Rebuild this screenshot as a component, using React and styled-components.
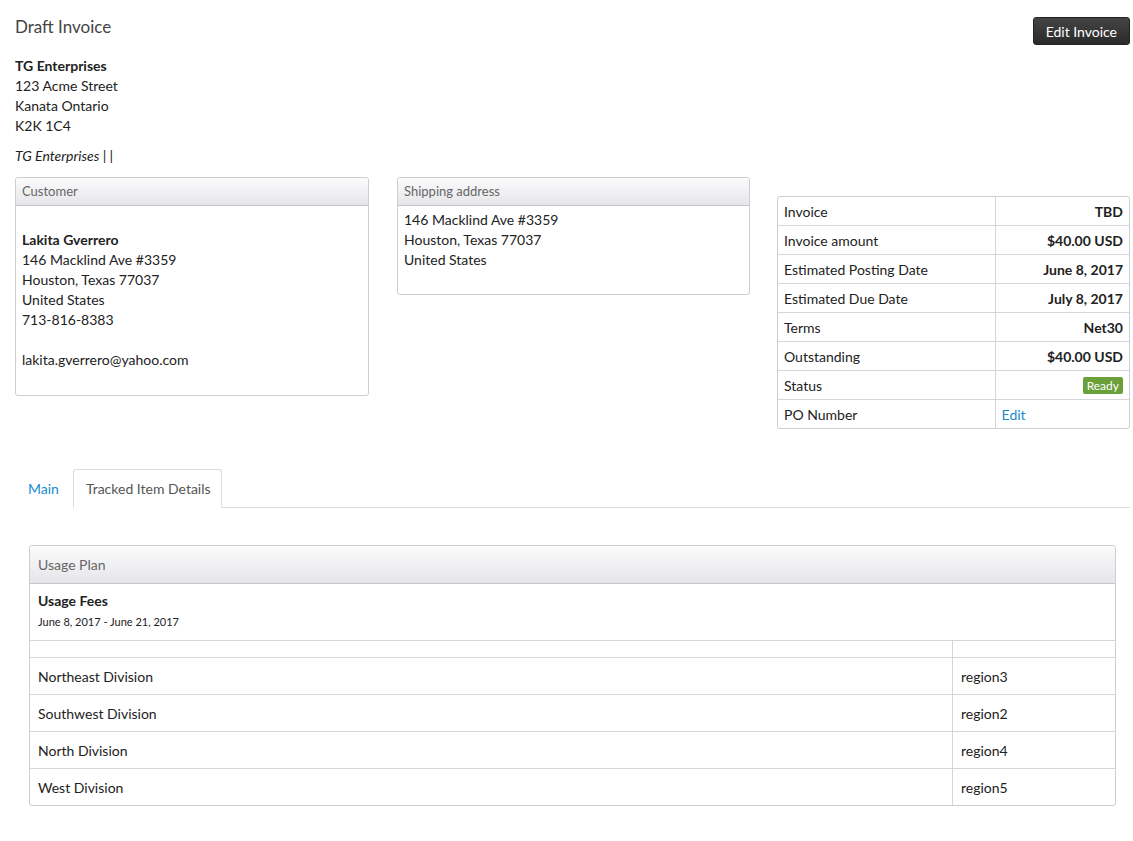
import styled, { createGlobalStyle } from 'styled-components';

const GlobalStyle = createGlobalStyle`
  html, body {
    margin: 0;
    padding: 0;
    background: #fff;
  }
  body {
    font-family: Lato, "Open Sans", sans-serif;
    font-size: 14px;
    color: #222;
  }
`;

const summary = [
  { label: 'Invoice', value: 'TBD' },
  { label: 'Invoice amount', value: '$40.00 USD' },
  { label: 'Estimated Posting Date', value: 'June 8, 2017' },
  { label: 'Estimated Due Date', value: 'July 8, 2017' },
  { label: 'Terms', value: 'Net30' },
  { label: 'Outstanding', value: '$40.00 USD' },
  { label: 'Status', badge: 'Ready' },
  { label: 'PO Number', link: 'Edit' },
];

const divisions = [
  { name: 'Northeast Division', code: 'region3' },
  { name: 'Southwest Division', code: 'region2' },
  { name: 'North Division', code: 'region4' },
  { name: 'West Division', code: 'region5' },
];

export default function App() {
  return (
    <>
      <GlobalStyle />
      <Page>
        <TopBar>
          <Title>Draft Invoice</Title>
          <EditButton type="button">Edit Invoice</EditButton>
        </TopBar>

        <Address>
          <strong>TG Enterprises</strong>
          <span>123 Acme Street</span>
          <span>Kanata Ontario</span>
          <span>K2K 1C4</span>
        </Address>
        <Tagline>TG Enterprises | |</Tagline>

        <Columns>
          <Panel>
            <PanelHeader>Customer</PanelHeader>
            <PanelBody $tall>
              <Spacer />
              <strong>Lakita Gverrero</strong>
              <span>146 Macklind Ave #3359</span>
              <span>Houston, Texas 77037</span>
              <span>United States</span>
              <span>713-816-8383</span>
              <Spacer />
              <span>lakita.gverrero@yahoo.com</span>
            </PanelBody>
          </Panel>

          <Panel>
            <PanelHeader>Shipping address</PanelHeader>
            <PanelBody>
              <span>146 Macklind Ave #3359</span>
              <span>Houston, Texas 77037</span>
              <span>United States</span>
            </PanelBody>
          </Panel>

          <SummaryTable>
            <tbody>
              {summary.map((row) => (
                <tr key={row.label}>
                  <SummaryLabel>{row.label}</SummaryLabel>
                  <SummaryValue $left={!!row.link}>
                    {row.badge && <Badge>{row.badge}</Badge>}
                    {row.link && <Link href="#">{row.link}</Link>}
                    {row.value}
                  </SummaryValue>
                </tr>
              ))}
            </tbody>
          </SummaryTable>
        </Columns>

        <Tabs>
          <Tab>Main</Tab>
          <Tab $active>Tracked Item Details</Tab>
        </Tabs>

        <UsagePanel>
          <UsageHeader>Usage Plan</UsageHeader>
          <FeesBlock>
            <strong>Usage Fees</strong>
            <small>June 8, 2017 - June 21, 2017</small>
          </FeesBlock>
          <UsageTable>
            <tbody>
              <tr>
                <BlankCell />
                <BlankCell $narrow />
              </tr>
              {divisions.map((d) => (
                <tr key={d.code}>
                  <UsageCell>{d.name}</UsageCell>
                  <UsageCell $narrow>{d.code}</UsageCell>
                </tr>
              ))}
            </tbody>
          </UsageTable>
        </UsagePanel>
      </Page>
    </>
  );
}

const Page = styled.div`
  padding: 17px 3px 0 15px;
`;

const TopBar = styled.div`
  display: flex;
  justify-content: space-between;
  align-items: flex-start;
`;

const Title = styled.h1`
  margin: 0;
  font-size: 17px;
  font-weight: 400;
  color: #444;
  line-height: 20px;
`;

const EditButton = styled.button`
  height: 28px;
  padding: 0 12px;
  border: 1px solid #222;
  border-radius: 3px;
  background: linear-gradient(#444, #2b2b2b);
  color: #fff;
  font-family: inherit;
  font-size: 14px;
`;

const Address = styled.div`
  display: flex;
  flex-direction: column;
  margin-top: 11px;
  line-height: 20px;

  strong {
    font-weight: 700;
  }
`;

const Tagline = styled.div`
  margin-top: 10px;
  font-style: italic;
  line-height: 20px;
`;

const Columns = styled.div`
  display: grid;
  grid-template-columns: 354px 353px 1fr;
  column-gap: 28px;
  align-items: start;
  margin-top: 11px;
`;

const Panel = styled.div`
  border: 1px solid #cdcdd2;
  border-radius: 3px;
  overflow: hidden;
`;

const PanelHeader = styled.div`
  height: 27px;
  line-height: 27px;
  padding: 0 6px;
  background: linear-gradient(#fbfbfc, #e6e6ea);
  border-bottom: 1px solid #c5c5cc;
  color: #666;
  font-size: 13px;
`;

const PanelBody = styled.div`
  display: flex;
  flex-direction: column;
  padding: 4px 6px ${(p) => (p.$tall ? '25px' : '24px')};
  line-height: 20px;
`;

const Spacer = styled.div`
  height: 20px;
`;

const SummaryTable = styled.table`
  margin: 19px 0 0 -1px;
  width: calc(100% + 1px);
  border-collapse: separate;
  border-spacing: 0;
  border: 1px solid #cdcdd2;
  border-radius: 3px;

  tr:last-child td {
    border-bottom: none;
  }
`;

const SummaryLabel = styled.td`
  width: 62%;
  height: 28px;
  padding: 0 6px;
  border-bottom: 1px solid #d5d5da;
  border-right: 1px solid #d5d5da;
`;

const SummaryValue = styled.td`
  height: 28px;
  padding: 0 6px;
  border-bottom: 1px solid #d5d5da;
  text-align: ${(p) => (p.$left ? 'left' : 'right')};
  font-weight: 700;
`;

const Badge = styled.span`
  display: inline-block;
  padding: 0 4px;
  line-height: 17px;
  border-radius: 2px;
  background: #6a9f3a;
  color: #fff;
  font-size: 12px;
  font-weight: 400;
`;

const Link = styled.a`
  color: #1a8ad0;
  font-weight: 400;
  text-decoration: none;
`;

const Tabs = styled.div`
  display: flex;
  align-items: flex-end;
  margin-top: 40px;
  border-bottom: 1px solid #dcdce0;
`;

const Tab = styled.div`
  height: 37px;
  line-height: 37px;
  padding: 0 ${(p) => (p.$active ? '10px' : '13px')} 0 12px;
  margin-bottom: -1px;
  color: ${(p) => (p.$active ? '#555' : '#1a8ad0')};
  background: #fff;
  border: 1px solid ${(p) => (p.$active ? '#dcdce0' : 'transparent')};
  border-bottom-color: ${(p) => (p.$active ? '#fff' : 'transparent')};
  border-radius: 3px 3px 0 0;
`;

const UsagePanel = styled.div`
  margin: 37px 14px 0 14px;
  border: 1px solid #cdcdd2;
  border-radius: 3px;
  overflow: hidden;
`;

const UsageHeader = styled.div`
  height: 37px;
  line-height: 37px;
  padding: 0 8px;
  background: linear-gradient(#fbfbfc, #e6e6ea);
  border-bottom: 1px solid #c5c5cc;
  color: #666;
`;

const FeesBlock = styled.div`
  display: flex;
  flex-direction: column;
  padding: 7px 8px 7px;
  border-bottom: 1px solid #d5d5da;

  strong {
    line-height: 20px;
  }

  small {
    font-size: 11px;
    line-height: 22px;
  }
`;

const UsageTable = styled.table`
  width: 100%;
  border-collapse: collapse;

  tr:last-child td {
    border-bottom: none;
  }
`;

const BlankCell = styled.td`
  height: 16px;
  padding: 0;
  border-bottom: 1px solid #d5d5da;
  ${(p) => p.$narrow && 'width: 154px; border-left: 1px solid #d5d5da;'}
`;

const UsageCell = styled.td`
  height: 36px;
  padding: 0 8px;
  border-bottom: 1px solid #d5d5da;
  ${(p) => p.$narrow && 'width: 146px; border-left: 1px solid #d5d5da;'}
`;
